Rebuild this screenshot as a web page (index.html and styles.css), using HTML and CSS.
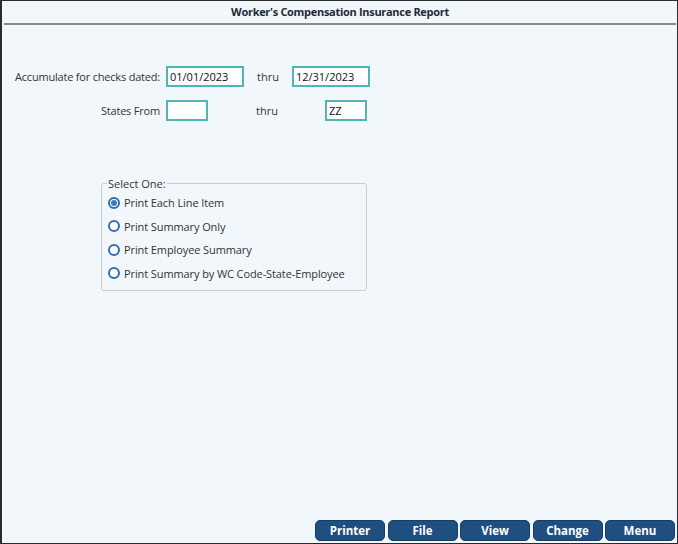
FILE: index.html
```html
<!DOCTYPE html>
<html>
<head>
<meta charset="utf-8">
<link rel="stylesheet" href="styles.css">
</head>
<body>
<div class="window">
  <div class="titlebar">Worker's Compensation Insurance Report</div>
  <div class="content">
    <div class="row row-dates">
      <span class="lbl">Accumulate for checks dated:</span>
      <span class="inp inp-date">01/01/2023</span>
      <span class="thru thru1">thru</span>
      <span class="inp inp-date inp-to1">12/31/2023</span>
    </div>
    <div class="row row-states">
      <span class="lbl">States From</span>
      <span class="inp inp-state"></span>
      <span class="thru thru2">thru</span>
      <span class="inp inp-state inp-to2">ZZ</span>
    </div>
    <fieldset class="group">
      <legend class="legend">Select One:</legend>
      <div class="opt"><span class="radio checked"></span><span>Print Each Line Item</span></div>
      <div class="opt"><span class="radio"></span><span>Print Summary Only</span></div>
      <div class="opt"><span class="radio"></span><span>Print Employee Summary</span></div>
      <div class="opt"><span class="radio"></span><span>Print Summary by WC Code-State-Employee</span></div>
    </fieldset>
  </div>
  <div class="footer">
    <button class="btn">Printer</button>
    <button class="btn">File</button>
    <button class="btn">View</button>
    <button class="btn">Change</button>
    <button class="btn">Menu</button>
  </div>
</div>
</body>
</html>
```
FILE: styles.css
```css
html, body {
  margin: 0;
  padding: 0;
}
body {
  font-family: "Open Sans", "Noto Sans", sans-serif;
  font-size: 11px;
  color: #222;
}
.window {
  width: 678px;
  height: 544px;
  box-sizing: border-box;
  border: 1px solid #2b2b2b;
  border-left-width: 2px;
  background: #f2f7fc;
  display: flex;
  flex-direction: column;
}
.titlebar {
  height: 22px;
  margin: 0 1px 0 2px;
  border-bottom: 2px solid #878c91;
  text-align: center;
  font-weight: bold;
  font-size: 11px;
  letter-spacing: -0.3px;
  line-height: 22px;
  color: #1e2a36;
}
.content {
  flex: 1;
  display: flex;
  flex-direction: column;
}
.row {
  display: flex;
  align-items: center;
  height: 21px;
}
.row-dates {
  margin-top: 41px;
}
.row-states {
  margin-top: 13px;
}
.lbl {
  width: 158px;
  text-align: right;
  color: #333;
  white-space: nowrap;
  letter-spacing: -0.2px;
}
.inp {
  box-sizing: border-box;
  height: 21px;
  border: 2px solid #4fb5b5;
  background: #fff;
  margin-left: 6px;
  padding: 0 2px;
  line-height: 17px;
  color: #111;
}
.inp-date {
  width: 78px;
}
.inp-state {
  width: 42px;
}
.thru {
  color: #333;
}
.thru1 {
  margin-left: 13px;
}
.inp-to1 {
  margin-left: 13px;
}
.thru2 {
  margin-left: 48px;
}
.inp-to2 {
  margin-left: 47px;
}
.group {
  margin: 55px 0 0 99px;
  width: 266px;
  height: 115px;
  box-sizing: border-box;
  border: 1px solid #c9cdd2;
  border-radius: 3px;
  padding: 0 0 0 6px;
}
.legend {
  padding: 0 1px;
  margin-left: -1px;
  color: #333;
}
.opt {
  display: flex;
  align-items: center;
  height: 23.5px;
  color: #333;
  letter-spacing: -0.1px;
}
.radio {
  box-sizing: border-box;
  width: 12px;
  height: 12px;
  border: 2px solid #2f6db5;
  border-radius: 50%;
  background: #fff;
  margin-right: 4px;
  display: flex;
  align-items: center;
  justify-content: center;
}
.radio.checked::after {
  content: "";
  width: 6px;
  height: 6px;
  border-radius: 50%;
  background: #3a7cc6;
}
.footer {
  display: flex;
  justify-content: flex-end;
  gap: 2.5px;
  padding: 0 2px 2px 0;
}
.btn {
  width: 70px;
  height: 21px;
  border: 1px solid #163e66;
  border-radius: 5px;
  background: #1e4f80;
  color: #fff;
  font-family: "Open Sans", "Noto Sans", sans-serif;
  font-weight: bold;
  font-size: 11.5px;
  padding: 0;
}
```
